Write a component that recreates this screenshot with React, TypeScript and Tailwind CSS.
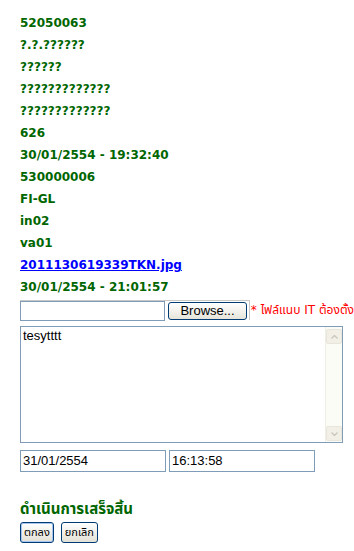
const LINES = [
  "52050063",
  "?.?.??????",
  "??????",
  "?????????????",
  "?????????????",
  "626",
  "30/01/2554 - 19:32:40",
  "530000006",
  "FI-GL",
  "in02",
  "va01",
]

const btn =
  "h-[21px] rounded-[3px] border border-[#003c74] bg-gradient-to-b from-white to-[#e3e1d6] px-[3px] text-[11px] leading-none text-black"

export default function App() {
  return (
    <div className="min-h-[551px] w-[354px] overflow-hidden bg-white pl-5 pt-[12px] font-['Tahoma','DejaVu_Sans','Noto_Sans_Thai',sans-serif] whitespace-nowrap">
      <div className="text-[12px] font-bold leading-[22px] text-[#006600]">
        {LINES.map((line, i) => (
          <div key={i}>{line}</div>
        ))}
        <div>
          <a href="#" className="text-[#0000ff] underline">
            2011130619339TKN.jpg
          </a>
        </div>
        <div>30/01/2554 - 21:01:57</div>
      </div>

      {/* file upload row */}
      <div className="mt-[2px] flex h-[20px] items-center">
        <div className="flex h-[20px] w-[233px] items-center border-r border-t border-[#c8c8c8]">
          <div className="h-[20px] w-[145px] border border-[#7f9db9] bg-white" />
          <button
            className="ml-[3px] h-[18px] w-[79px] rounded-[3px] border border-[#003c74] bg-gradient-to-b from-white to-[#e6e4da] font-['Liberation_Sans',sans-serif] text-[13px] leading-none text-black"
          >
            Browse...
          </button>
        </div>
        <span className="ml-[1px] text-[12px] text-[#ff0000]">* ไฟล์แนบ IT ต้องตั้ง</span>
      </div>

      {/* textarea with xp-style scrollbar */}
      <div className="mt-[6px] flex h-[117px] w-[323px] border border-[#7f9db9] bg-white">
        <textarea
          defaultValue="tesytttt"
          className="flex-1 resize-none px-[2px] py-[1px] font-['Liberation_Sans',sans-serif] text-[13px] leading-[16px] text-black outline-none"
        />
        <div className="flex w-[17px] flex-col justify-between border-l border-[#f0efe6] bg-[#fcfcf6] pb-[1px] pt-[2px]">
          <div className="flex h-[15px] w-[16px] items-center justify-center rounded-[2px] border border-[#e8e6dc] bg-[#f1efe6]">
            <svg width="7" height="4" viewBox="0 0 7 4">
              <path d="M0.5 3.5 L3.5 0.5 L6.5 3.5" fill="none" stroke="#c9c7bd" strokeWidth="1.3" />
            </svg>
          </div>
          <div className="flex h-[15px] w-[16px] items-center justify-center rounded-[2px] border border-[#e8e6dc] bg-[#f1efe6]">
            <svg width="7" height="4" viewBox="0 0 7 4">
              <path d="M0.5 0.5 L3.5 3.5 L6.5 0.5" fill="none" stroke="#c9c7bd" strokeWidth="1.3" />
            </svg>
          </div>
        </div>
      </div>

      {/* date / time */}
      <div className="mt-[7px] flex gap-[3px] font-['Liberation_Sans',sans-serif] text-[13px] text-black">
        <div className="flex h-[22px] w-[146px] items-center border border-[#7f9db9] pl-[2px]">31/01/2554</div>
        <div className="flex h-[22px] w-[146px] items-center border border-[#7f9db9] pl-[2px]">16:13:58</div>
      </div>

      <div className="mt-[27px] text-[15px] font-bold leading-[20px] text-[#006600]">ดำเนินการเสร็จสิ้น</div>

      <div className="mt-[3px] flex gap-[7px]">
        <button className={`${btn} shadow-[inset_0_0_0_1px_#a8c4f0]`}>ตกลง</button>
        <button className={btn}>ยกเลิก</button>
      </div>
    </div>
  )
}
